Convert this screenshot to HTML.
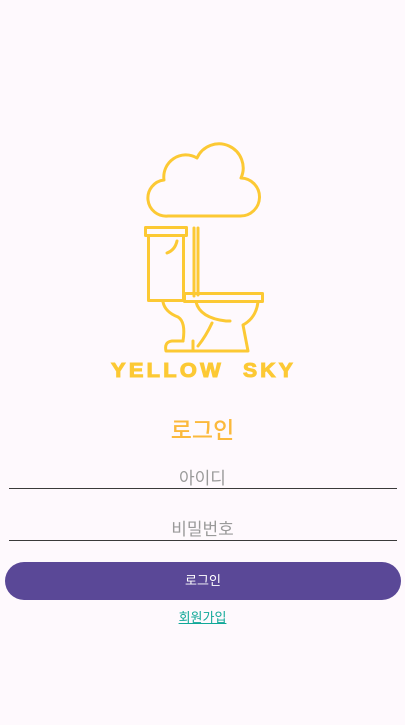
<!DOCTYPE html>
<html><head><meta charset="utf-8"><style>
html,body{margin:0;padding:0;width:405px;height:725px;background:#fef9fd;overflow:hidden;font-family:"Liberation Sans","Noto Sans CJK KR",sans-serif;position:relative}
.a{position:absolute;left:0;width:405px;text-align:center}
.line{position:absolute;left:9px;width:388px;height:1px;background:#3a3a3a}
</style></head><body>
<svg style="position:absolute;left:0;top:0" width="405" height="400" viewBox="0 0 405 400">
<g fill="none" stroke="#fcc934" stroke-width="3" stroke-linecap="round" stroke-linejoin="round">
<path d="M168,216 A18,18 0 0 1 164,180 A22,22 0 0 1 197,158 A24,24 0 0 1 241,178 A19,19 0 0 1 240,216 Z"/>
<rect x="145.5" y="227.5" width="41" height="8"/>
<rect x="148.5" y="235.5" width="35" height="65"/>
<path d="M167,253 Q175,250 177,241"/>
<path d="M194,228 V296 M198,228 V295"/>
<rect x="184.5" y="293.5" width="78" height="8"/>
<path d="M163,302 Q165,312 178,317 Q186,322 183,341"/>
<path d="M258,302 Q256,318 243,325 L248,351 H166 Q164,342 172,341 H183 M193,351 V341"/>
<path d="M196,302 Q200,318 226,321 H230 M212,323 Q206,336 198,346"/>
</g>
<g font-family="Liberation Sans, sans-serif" font-weight="900" font-size="20" fill="#fcc934" stroke="#fcc934" stroke-width="1">
<text x="111" y="377" textLength="113" lengthAdjust="spacingAndGlyphs" letter-spacing="3">YELLOW</text>
<text x="243" y="377" textLength="53" lengthAdjust="spacingAndGlyphs" letter-spacing="3">SKY</text>
</g>
</svg>
<div class="a" style="top:411px;font-size:23px;color:#fbb93c;font-weight:500">로그인</div>
<div class="a" style="top:464px;font-size:17px;color:#9a9a9a">아이디</div>
<div class="line" style="top:488px"></div>
<div class="a" style="top:515px;font-size:17px;color:#9a9a9a">비밀번호</div>
<div class="line" style="top:540px"></div>
<div style="position:absolute;left:5px;top:562px;width:396px;height:38px;border-radius:19px;background:#5a4897;color:#fff;font-size:13px;text-align:center;line-height:38px">로그인</div>
<div class="a" style="top:607px;font-size:13px;color:#10a898;text-decoration:underline">회원가입</div>
</body></html>
